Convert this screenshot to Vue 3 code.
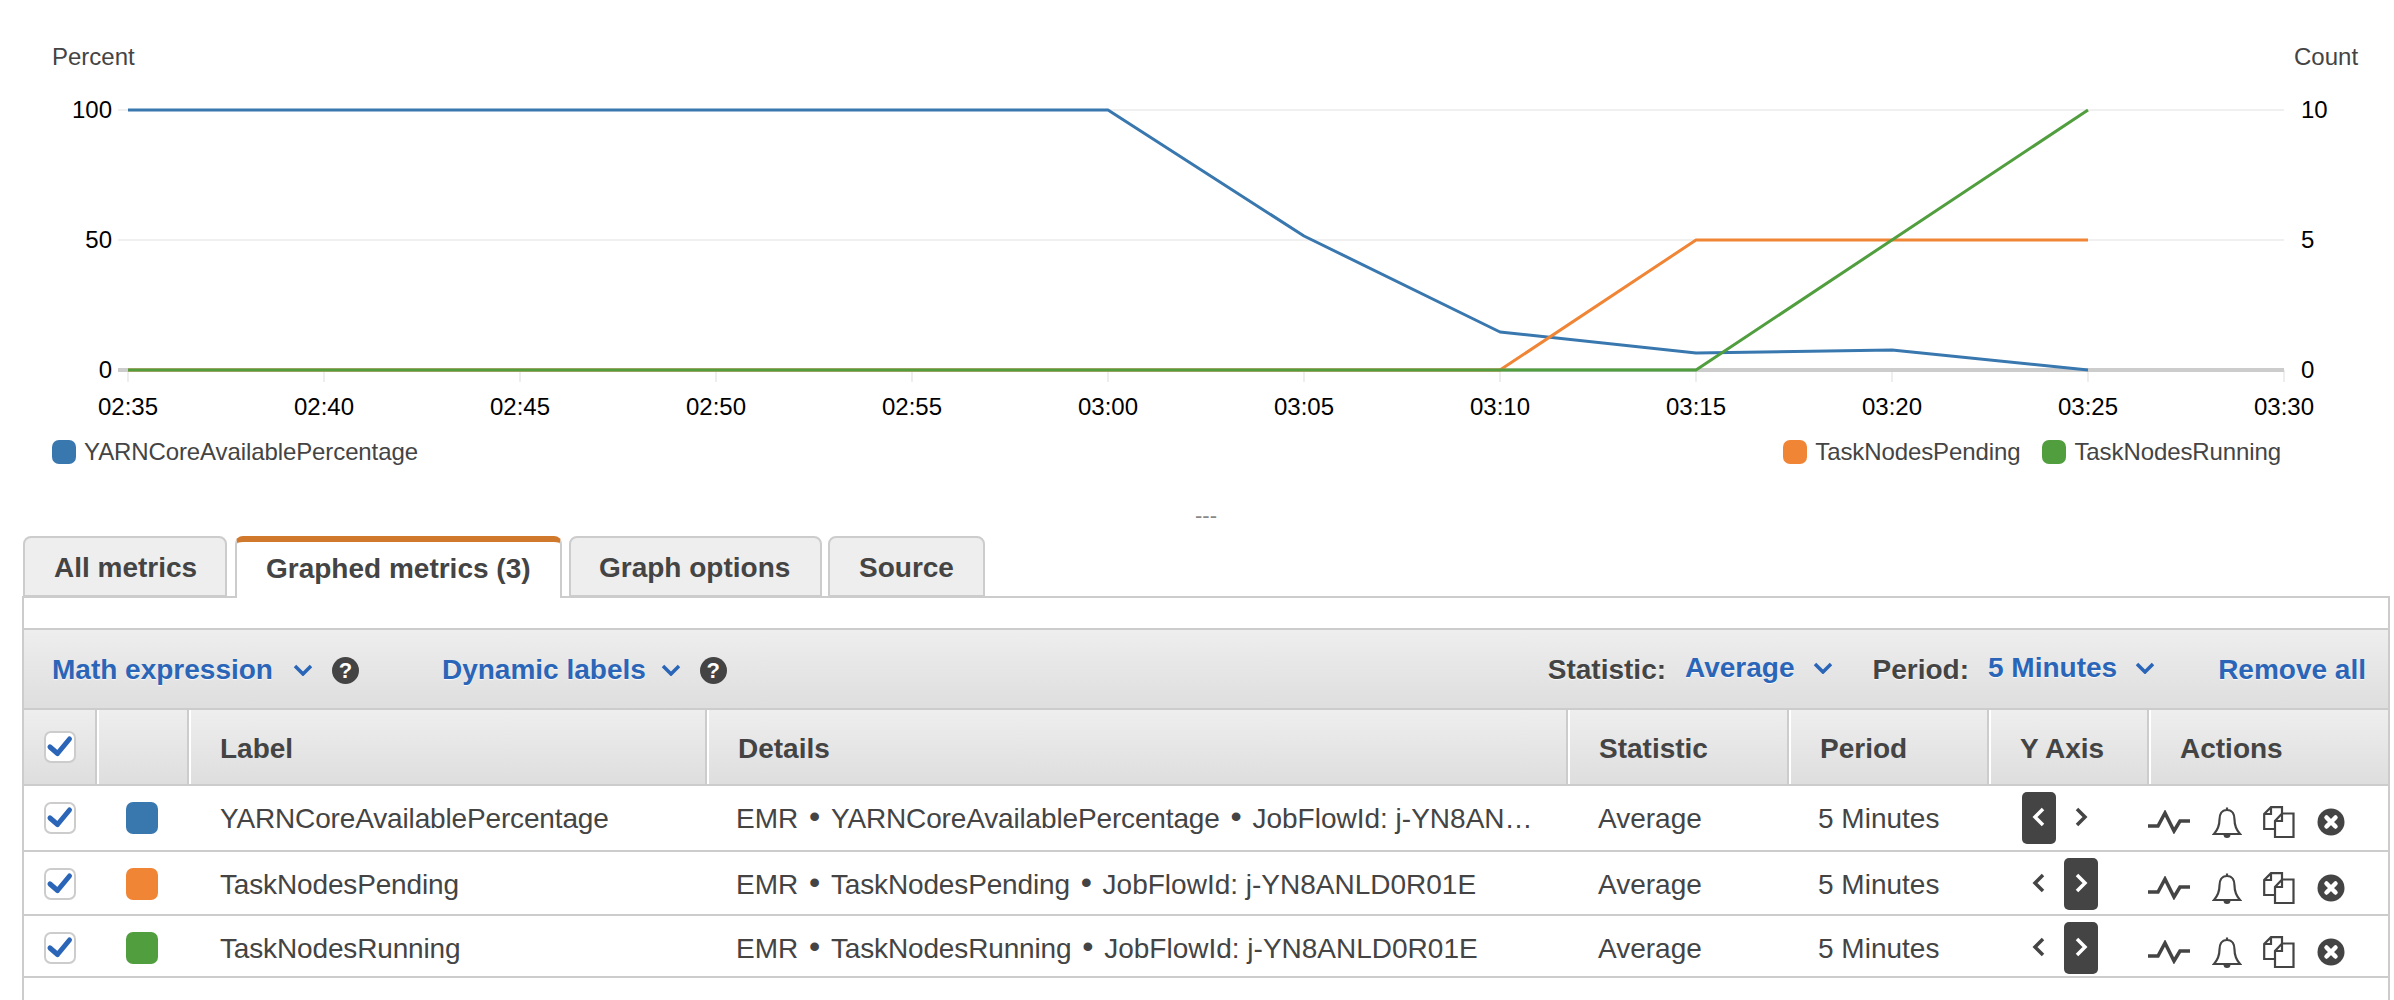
<script setup>
const ticks = ['02:35','02:40','02:45','02:50','02:55','03:00','03:05','03:10','03:15','03:20','03:25','03:30'].map((label, i) => ({ label, x: 128 + i * 196 }))
const grid = [110, 240, 370]
const leftAxis = [{ t: '100', y: 118 }, { t: '50', y: 248 }, { t: '0', y: 378 }]
const rightAxis = [{ t: '10', y: 118 }, { t: '5', y: 248 }, { t: '0', y: 378 }]
const blue = '128,110 1108,110 1304,236 1500,332 1696,353 1892,350 2088,370'
const orange = '128,370 1500,370 1696,240 2088,240'
const green = '128,370 1696,370 2088,110'
const tabs = [
  { label: 'All metrics', cls: 't1' },
  { label: 'Graphed metrics (3)', cls: 't2 active' },
  { label: 'Graph options', cls: 't3' },
  { label: 'Source', cls: 't4' }
]
const heads = ['Label', 'Details', 'Statistic', 'Period', 'Y Axis', 'Actions']
const rows = [
  { label: 'YARNCoreAvailablePercentage', color: '#3977af', side: 'left', job: 'JobFlowId: j-YN8AN…' },
  { label: 'TaskNodesPending', color: '#f08536', side: 'right', job: 'JobFlowId: j-YN8ANLD0R01E' },
  { label: 'TaskNodesRunning', color: '#519e3e', side: 'right', job: 'JobFlowId: j-YN8ANLD0R01E' }
]
</script>

<template>
  <div class="page">
    <svg class="chart" width="2394" height="425" viewBox="0 0 2394 425">
      <text class="unit" x="52" y="65">Percent</text>
      <text class="unit" x="2294" y="65">Count</text>
      <line v-for="y in grid" :key="y" x1="118" x2="2284" :y1="y" :y2="y" class="gridline" />
      <line v-for="t in ticks" :key="t.x" :x1="t.x" :x2="t.x" y1="370" y2="382" class="tick" />
      <line x1="118" x2="2284" y1="370" y2="370" class="base" />
      <text v-for="a in leftAxis" :key="'l' + a.t" class="num" x="112" :y="a.y" text-anchor="end">{{ a.t }}</text>
      <text v-for="a in rightAxis" :key="'r' + a.t" class="num" x="2301" :y="a.y">{{ a.t }}</text>
      <text v-for="t in ticks" :key="t.label" class="num" :x="t.x" y="415" text-anchor="middle">{{ t.label }}</text>
      <polyline :points="blue" class="series" stroke="#3977af" />
      <polyline :points="orange" class="series" stroke="#f08536" />
      <polyline :points="green" class="series" stroke="#519e3e" />
    </svg>

    <div class="legend">
      <div class="leg-item"><i class="leg-sw sw-blue"></i>YARNCoreAvailablePercentage</div>
      <div class="leg-right">
        <div class="leg-item"><i class="leg-sw sw-orange"></i>TaskNodesPending</div>
        <div class="leg-item"><i class="leg-sw sw-green"></i>TaskNodesRunning</div>
      </div>
    </div>

    <div class="handle">---</div>

    <div class="tabs">
      <div v-for="t in tabs" :key="t.label" class="tab" :class="t.cls">{{ t.label }}</div>
    </div>

    <div class="panel">
      <div class="toolbar">
        <span class="link">Math expression</span>
        <svg class="chev c1" width="20" height="12" viewBox="0 0 20 12"><path d="M2 2l8 8 8-8" /></svg>
        <span class="help">?</span>
        <span class="link dyn">Dynamic labels</span>
        <svg class="chev c2" width="20" height="12" viewBox="0 0 20 12"><path d="M2 2l8 8 8-8" /></svg>
        <span class="help">?</span>
        <span class="spacer"></span>
        <span class="lbl">Statistic:</span>
        <span class="link up">Average</span>
        <svg class="chev up" width="20" height="12" viewBox="0 0 20 12"><path d="M2 2l8 8 8-8" /></svg>
        <span class="lbl per">Period:</span>
        <span class="link up">5 Minutes</span>
        <svg class="chev up" width="20" height="12" viewBox="0 0 20 12"><path d="M2 2l8 8 8-8" /></svg>
        <span class="link rem">Remove all</span>
      </div>

      <div class="grid head">
        <div class="hc first">
          <span class="check head-check">
            <svg width="28" height="28" viewBox="0 0 28 28"><path d="M4 14l7.500 6.500L23.500 6" /></svg>
          </span>
        </div>
        <div class="hc"></div>
        <div v-for="h in heads" :key="h" class="hc">{{ h }}</div>
      </div>

      <div v-for="r in rows" :key="r.label" class="grid row">
        <div class="c c-check">
          <span class="check">
            <svg width="28" height="28" viewBox="0 0 28 28"><path d="M4 14l7.500 6.500L23.500 6" /></svg>
          </span>
        </div>
        <div class="c c-sw"><i class="swatch" :style="{ background: r.color }"></i></div>
        <div class="c c-text c-label">{{ r.label }}</div>
        <div class="c c-text c-details">EMR <span class="dot">•</span> <span class="tight">{{ r.label }}</span> <span class="dot">•</span> {{ r.job }}</div>
        <div class="c c-text c-stat">Average</div>
        <div class="c c-text c-period">5 Minutes</div>
        <div class="c c-axis">
          <span class="ax" :class="{ on: r.side === 'left' }">
            <svg width="14" height="20" viewBox="0 0 14 20"><path d="M11 2L3 10l8 8" /></svg>
          </span>
          <span class="ax" :class="{ on: r.side === 'right' }">
            <svg width="14" height="20" viewBox="0 0 14 20"><path d="M3 2l8 8-8 8" /></svg>
          </span>
        </div>
        <div class="c c-actions">
          <svg class="ic" width="42" height="24" viewBox="0 0 42 24"><path d="M0 16h10L17 3l9 18 6-10h10" /></svg>
          <svg class="ic thin" width="30" height="33" viewBox="0 0 30 33">
            <path d="M15 4C9.500 4 7.500 8.500 7.500 13.500 7.500 20 5.500 24 2 28H28C24.500 24 22.500 20 22.500 13.500 22.500 8.500 20.500 4 15 4ZM15 4V1.500" />
            <path class="solid" d="M11.500 28.500a3.500 3.500 0 0 0 7 0Z" />
          </svg>
          <svg class="ic thin" width="32" height="32" viewBox="0 0 32 32">
            <path d="M19 7V1.200H8L1.200 8V23H11M8 1.200V8H1.200" />
            <path d="M19 7.500H30.500V31H12V15ZM19 7.500V15H12" />
          </svg>
          <svg class="x" width="28" height="28" viewBox="0 0 28 28">
            <circle cx="14" cy="14" r="13.500" />
            <path d="M9.500 9.500l9 9M18.500 9.500l-9 9" />
          </svg>
        </div>
      </div>
    </div>
  </div>
</template>

<style>
html, body { margin: 0; background: #fff; }
</style>

<style scoped>
.page {
  width: 2394px;
  height: 1000px;
  overflow: hidden;
  display: flex;
  flex-direction: column;
  background: #fff;
  font-family: "Liberation Sans", Arial, sans-serif;
  color: #444;
}
.chart { display: block; flex: none; }
.unit { font-size: 24px; fill: #444; }
.num { font-size: 24px; fill: #000; }
.gridline { stroke: #f0f0f0; stroke-width: 2; }
.tick { stroke: #eee; stroke-width: 2; }
.base { stroke: #ccc; stroke-width: 4; }
.series { fill: none; stroke-width: 3; stroke-linejoin: round; }

.legend {
  flex: none;
  height: 54px;
  display: flex;
  justify-content: space-between;
  align-items: center;
  padding: 0 113px 0 52px;
  font-size: 24px;
  letter-spacing: -0.1px;
}
.leg-right { display: flex; gap: 22px; }
.leg-item { display: flex; align-items: center; gap: 8px; }
.leg-sw { width: 24px; height: 24px; border-radius: 7px; display: block; }
.sw-blue { background: #3977af; }
.sw-orange { background: #f08536; }
.sw-green { background: #519e3e; }

.handle {
  flex: none;
  height: 57px;
  display: flex;
  align-items: center;
  justify-content: center;
  padding: 16px 0 0 18px;
  box-sizing: border-box;
  font-size: 22px;
  color: #888;
}

.tabs {
  flex: none;
  height: 60px;
  display: flex;
  align-items: flex-start;
  padding-left: 23px;
  position: relative;
  z-index: 1;
}
.tab {
  box-sizing: border-box;
  height: 61px;
  border: 2px solid #ccc;
  border-bottom: 2px solid #ccc;
  border-radius: 8px 8px 0 0;
  background: #eee;
  font-size: 28px;
  font-weight: 700;
  line-height: 59px;
  padding-left: 29px;
  white-space: nowrap;
}
.t1 { width: 204px; margin-right: 8px; }
.t2 { width: 327px; margin-right: 7px; }
.t3 { width: 253px; margin-right: 6px; padding-left: 28px; }
.t4 { width: 157px; }
.tab.active {
  height: 62px;
  background: #fff;
  border-top: 6px solid #d0782c;
  border-bottom: 0;
  line-height: 53px;
}

.panel {
  flex: 1;
  box-sizing: border-box;
  margin: 0 4px 0 22px;
  padding-top: 30px;
  border: 2px solid #ccc;
  border-bottom: 0;
}
.toolbar {
  box-sizing: border-box;
  height: 82px;
  border-top: 2px solid #ccc;
  border-bottom: 2px solid #ccc;
  background: linear-gradient(#eeeeee, #dedede);
  display: flex;
  align-items: center;
  padding: 2px 22px 0 28px;
  font-size: 28px;
  text-shadow: 0 1px 1px rgba(255, 255, 255, 0.8);
}
.link { color: #2a65b8; font-weight: 700; white-space: nowrap; }
.lbl { font-weight: 700; color: #444; white-space: nowrap; }
.dyn { margin-left: 83px; }
.spacer { flex: 1; }
.chev { margin: 0 19px; flex: none; }
.chev path { fill: none; stroke: #2a65b8; stroke-width: 3.500; }
.chev.c1 { margin-left: 20px; }
.chev.c2 { margin-left: 15px; }
.chev.up { margin: 0 0 4px 18px; }
.up { margin-bottom: 4px; }
.lbl + .link { margin-left: 19px; }
.per { margin-left: 40px; }
.rem { margin-left: 63px; }
.help {
  width: 27px;
  height: 27px;
  border-radius: 50%;
  background: #444;
  color: #fff;
  font-size: 22px;
  font-weight: 700;
  line-height: 27px;
  text-align: center;
  flex: none;
  text-shadow: none;
}

.grid {
  display: grid;
  grid-template-columns: 71px 92px 518px 861px 221px 200px 160px 1fr;
  font-size: 28px;
}
.head {
  height: 76px;
  grid-template-rows: 74px;
  box-sizing: border-box;
  border-bottom: 2px solid #ccc;
  background: linear-gradient(#eeeeee, #dedede);
  font-weight: 700;
}
.hc {
  box-sizing: border-box;
  border-left: 2px solid #ccc;
  box-shadow: inset 2px 0 0 #fff;
  padding: 2px 0 0 31px;
  line-height: 74px;
  overflow: hidden;
  white-space: nowrap;
}
.hc.first { border-left: 0; box-shadow: none; padding: 21px 0 0 20px; line-height: 0; }
.hc:nth-child(2) { padding: 0; }

.row { box-sizing: border-box; border-bottom: 2px solid #ccc; }
.row:nth-of-type(3) { height: 66px; }
.row:nth-of-type(4) { height: 64px; }
.row:nth-of-type(5) { height: 62px; }

.c { min-width: 0; }
.c-check { padding: 16px 0 0 20px; }
.c-sw { padding: 16px 0 0 31px; }
.swatch { display: block; width: 32px; height: 32px; border-radius: 7px; }
.check {
  box-sizing: border-box;
  display: flex;
  align-items: center;
  justify-content: center;
  width: 32px;
  height: 32px;
  border: 2px solid #ccc;
  border-radius: 7px;
  background: #fff;
}
.check svg { display: block; }
.check path { fill: none; stroke: #2a65b8; stroke-width: 5; stroke-linecap: round; stroke-linejoin: round; }
.c-text {
  padding-top: 17px;
  line-height: 32px;
  white-space: nowrap;
}
.c-label, .tight { letter-spacing: -0.15px; }
.c-label { padding-left: 33px; }
.c-details { padding-left: 31px; }
.dot {
  font-size: 32px;
  line-height: 0;
  vertical-align: 1px;
  margin: 0 3px;
}
.c-stat { padding-left: 32px; }
.c-period { padding-left: 31px; }
.c-axis { display: flex; gap: 8px; padding: 6px 0 0 35px; }
.ax {
  width: 34px;
  height: 52px;
  border-radius: 5px;
  display: flex;
  align-items: center;
  justify-content: center;
}
.ax svg { margin-bottom: 2px; }
.ax path { fill: none; stroke: #444; stroke-width: 3.500; }
.ax.on { background: #444; }
.ax.on path { stroke: #fff; }
.c-actions {
  display: flex;
  align-items: center;
  align-self: start;
  height: 32px;
  gap: 21.500px;
  margin: 20px 0 0 1px;
}
.ic { flex: none; display: block; }
.ic path { fill: none; stroke: #444; stroke-width: 3.500; }
.ic.thin path { stroke-width: 2.200; }
.ic.thin path.solid { fill: #444; stroke: none; }
.x { flex: none; display: block; }
.x circle { fill: #444; }
.x path { fill: none; stroke: #fff; stroke-width: 4.500; stroke-linecap: round; }
</style>
